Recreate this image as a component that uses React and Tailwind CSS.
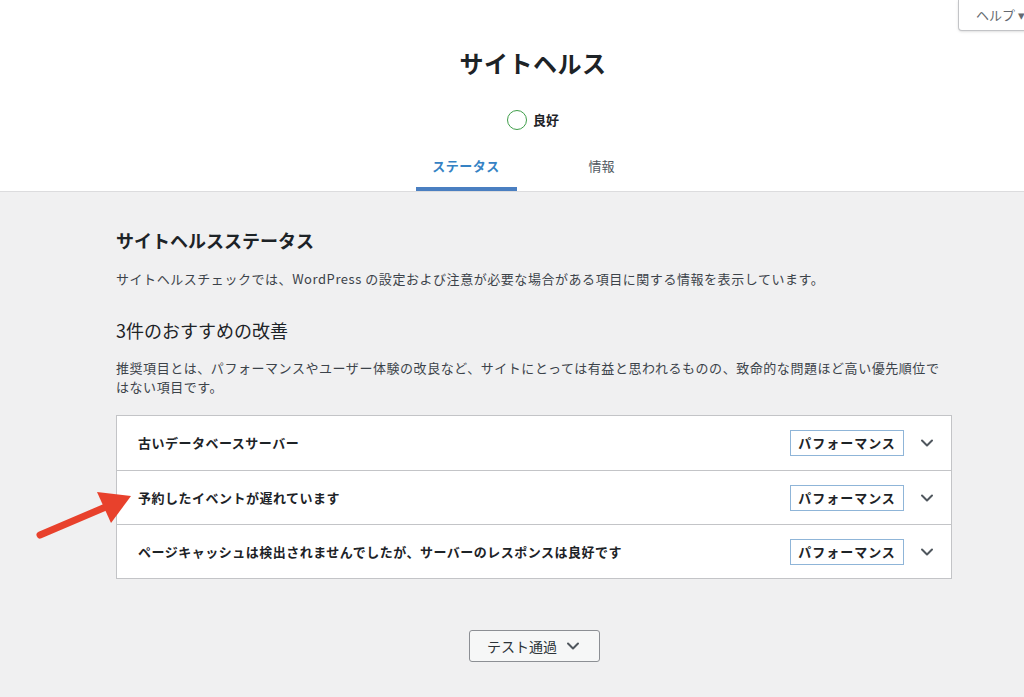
import React from "react";

const font = { fontFamily: '"Noto Sans CJK JP", "Noto Sans", sans-serif' };

function Chevron({ className = "" }) {
  return (
    <svg className={className} width="16" height="16" viewBox="0 0 16 16" fill="none">
      <path d="M3 5.5 L8 10.5 L13 5.5" stroke="#50575e" strokeWidth="2" strokeLinecap="round" strokeLinejoin="round" />
    </svg>
  );
}

const items = [
  "古いデータベースサーバー",
  "予約したイベントが遅れています",
  "ページキャッシュは検出されませんでしたが、サーバーのレスポンスは良好です",
];

export default function App() {
  return (
    <div className="relative w-[1024px] h-[697px] overflow-hidden bg-[#f0f0f1] text-[#1d2327]" style={font}>
      {/* Header */}
      <div className="relative bg-white border-b border-[#dcdcde] h-[192px] flex flex-col items-center">
        <div className="absolute right-[-14px] top-0 w-[80px] h-[31px] border border-t-0 border-[#c3c4c7] rounded-b-[4px] bg-white flex items-center pl-[17px] text-[13px] text-[#646970] shadow-sm">
          ヘルプ ▾
        </div>
        <h1 className="mt-[46px] pl-[42px] text-[24px] font-bold leading-[34px] tracking-[0.5px]">サイトヘルス</h1>
        <div className="mt-[28px] pl-[42px] flex items-center gap-[6px] h-[24px]">
          <span className="w-[20px] h-[20px] rounded-full border-[1.5px] border-[#3f9e4a]"></span>
          <span className="text-[13px] font-bold">良好</span>
        </div>
        <div className="mt-auto pl-[78px] flex h-[44px]">
          <div className="w-[101px] flex justify-center items-start pt-[9px] border-b-4 border-[#4a7fc1] text-[13px] font-bold text-[#3582c4] tracking-[0.5px]">
            ステータス
          </div>
          <div className="w-[170px] flex justify-center items-start pt-[9px] text-[13px] text-[#50575e]">
            情報
          </div>
        </div>
      </div>

      {/* Body */}
      <div className="ml-[116px] w-[836px] pt-[34px]">
        <h2 className="text-[18px] font-bold leading-[28px]">サイトヘルスステータス</h2>
        <p className="mt-[15px] text-[13px] leading-[20px] text-[#3c434a] tracking-[0.55px]">
          サイトヘルスチェックでは、WordPress の設定および注意が必要な場合がある項目に関する情報を表示しています。
        </p>
        <h3 className="mt-[27px] text-[18px] leading-[28px]">3件のおすすめの改善</h3>
        <p className="mt-[14px] text-[13px] leading-[19px] text-[#3c434a] tracking-[0.55px]">
          推奨項目とは、パフォーマンスやユーザー体験の改良など、サイトにとっては有益と思われるものの、致命的な問題ほど高い優先順位ではない項目です。
        </p>
        <div className="mt-[19px] border border-[#c3c4c7] bg-white">
          {items.map((t, i) => (
            <div
              key={i}
              className={`h-[54px] flex items-center pl-[21px] pr-[16px] ${i > 0 ? "border-t border-[#c3c4c7]" : ""}`}
            >
              <span className="flex-1 text-[13px] font-bold tracking-[0.5px]">{t}</span>
              <span className="h-[26px] w-[114px] flex items-center justify-center border border-[#8fb5d8] text-[13px] font-bold tracking-[1px]">
                パフォーマンス
              </span>
              <Chevron className="ml-[15px]" />
            </div>
          ))}
        </div>
        <div className="mt-[51px] flex justify-center">
          <button className="w-[131px] h-[32px] border border-[#8c8f94] rounded-[3px] bg-[#f6f7f7] flex items-center justify-center gap-[8px] text-[14px] text-[#2c3338]">
            テスト通過
            <Chevron />
          </button>
        </div>
      </div>

      {/* Red arrow annotation */}
      <svg className="absolute left-0 top-0 pointer-events-none" width="1024" height="697">
        <line x1="40" y1="535" x2="108" y2="506" stroke="#e8412c" strokeWidth="7" strokeLinecap="round" />
        <polygon points="131,496 97,492 111,523" fill="#e8412c" />
      </svg>
    </div>
  );
}
